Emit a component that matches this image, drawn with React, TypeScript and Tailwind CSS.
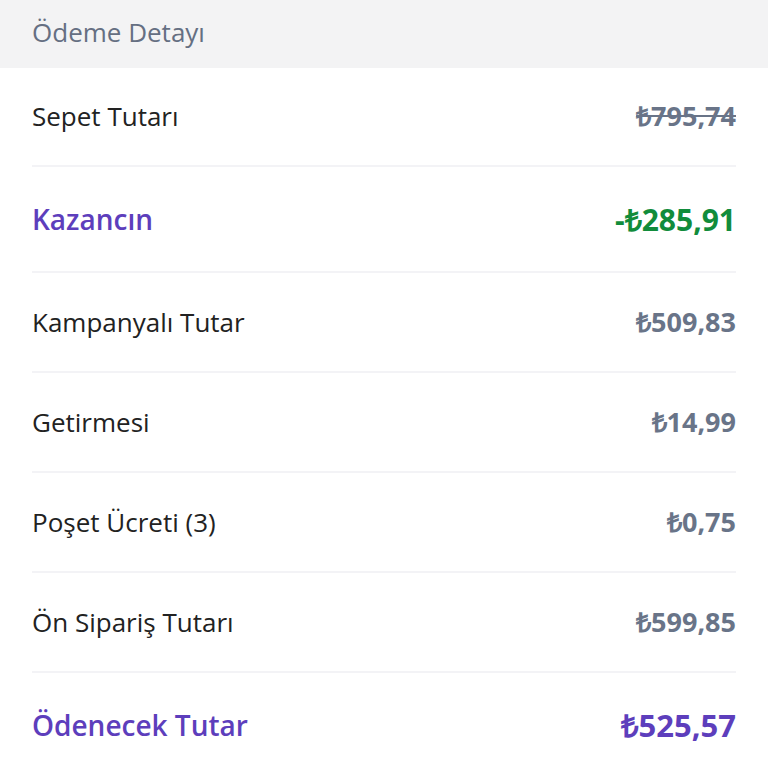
export default function App() {
  const rows = [
    { label: "Kampanyalı Tutar", value: "₺509,83" },
    { label: "Getirmesi", value: "₺14,99" },
    { label: "Poşet Ücreti (3)", value: "₺0,75" },
    { label: "Ön Sipariş Tutarı", value: "₺599,85" },
  ];

  return (
    <div className="min-h-screen bg-white font-['Open_Sans',sans-serif]">
      {/* başlık */}
      <div className="h-[68px] bg-[#f3f3f4] px-8 pb-1 flex items-center">
        <h2 className="text-[26px] text-[#656f82] font-medium">Ödeme Detayı</h2>
      </div>

      <div className="px-8">
        <div className="h-[99px] flex items-center justify-between border-b-2 border-[#f3f3f6]">
          <span className="text-[26px] font-medium text-[#222222]">Sepet Tutarı</span>
          <span className="text-[27px] font-bold text-[#697488] line-through">₺795,74</span>
        </div>

        <div className="h-[106px] flex items-center justify-between border-b-2 border-[#f3f3f6]">
          <span className="text-[28px] font-semibold text-[#5d3ebc]">Kazancın</span>
          <span className="text-[30px] font-bold text-[#118c3b]">-₺285,91</span>
        </div>

        {rows.map((r) => (
          <div key={r.label} className="h-[100px] flex items-center justify-between border-b-2 border-[#f3f3f6]">
            <span className="text-[26px] font-medium text-[#222222]">{r.label}</span>
            <span className="text-[27px] font-bold text-[#697488]">{r.value}</span>
          </div>
        ))}

        <div className="h-[104px] flex items-center justify-between">
          <span className="text-[28px] font-semibold text-[#5d3ebc]">Ödenecek Tutar</span>
          <span className="text-[31px] font-bold text-[#5d3ebc]">₺525,57</span>
        </div>
      </div>
    </div>
  );
}
